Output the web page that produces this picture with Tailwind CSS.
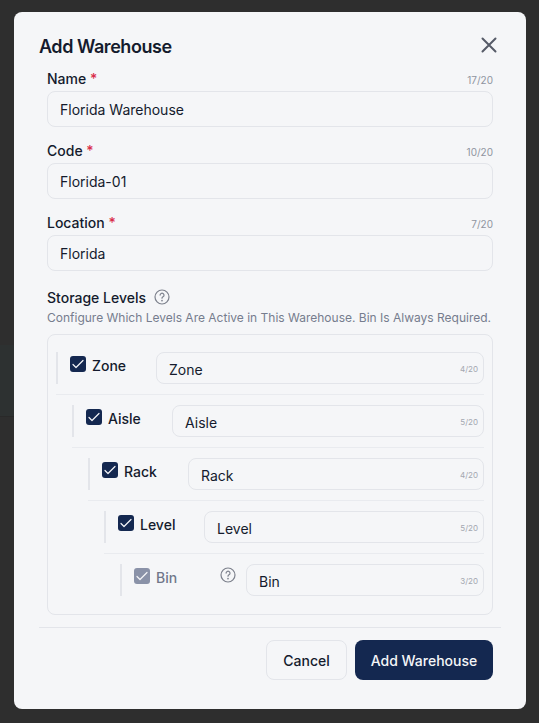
<!DOCTYPE html>
<html lang="en">
<head>
<meta charset="UTF-8">
<title>Add Warehouse</title>
<script src="https://cdn.jsdelivr.net/npm/@tailwindcss/browser@4"></script>
</head>
<body>
<div class="relative h-[723px] w-[539px] overflow-hidden bg-[#2e2e2e] pt-3 pl-[14px] font-['Inter',sans-serif]">
  <!-- page showing through the backdrop -->
  <div class="absolute top-[345px] left-0 h-[72px] w-[14px] border-b border-[#292929] bg-[#2d3131]"></div>
  <div class="relative h-[697px] w-[512px] rounded-lg bg-[#f5f6f8] px-[25px]">
    <!-- header -->
    <div class="flex h-[57px] items-start justify-between pt-[21px]">
      <h1 class="text-lg leading-7 font-semibold tracking-tight text-[#141b2d]">Add Warehouse</h1>
      <button class="mt-[3px] mr-[3px] text-[#565b68]">
        <svg width="18" height="18" viewBox="0 0 18 18" fill="none" stroke="currentColor" stroke-width="2" stroke-linecap="round"><path d="M2.5 2.5l13 13M15.5 2.5l-13 13"/></svg>
      </button>
    </div>

    <div class="px-2">
      <!-- text fields -->
      <div>
        <div class="flex h-[22px] items-center justify-between">
          <label class="mb-[2px] text-sm font-medium text-[#141b2d]">Name <span class="text-[#d92d4a]">*</span></label>
          <span class="text-[10px] text-[#8f949f]">17/20</span>
        </div>
        <input value="Florida Warehouse" class="h-9 w-full rounded-lg border border-[#e3e5ea] px-3 text-sm text-[#141b2d]">
      </div>
      <div class="mt-[14px]">
        <div class="flex h-[22px] items-center justify-between">
          <label class="mb-[2px] text-sm font-medium text-[#141b2d]">Code <span class="text-[#d92d4a]">*</span></label>
          <span class="text-[10px] text-[#8f949f]">10/20</span>
        </div>
        <input value="Florida-01" class="h-9 w-full rounded-lg border border-[#e3e5ea] px-3 text-sm text-[#141b2d]">
      </div>
      <div class="mt-[14px]">
        <div class="flex h-[22px] items-center justify-between">
          <label class="mb-[2px] text-sm font-medium text-[#141b2d]">Location <span class="text-[#d92d4a]">*</span></label>
          <span class="text-[10px] text-[#8f949f]">7/20</span>
        </div>
        <input value="Florida" class="h-9 w-full rounded-lg border border-[#e3e5ea] px-3 text-sm text-[#141b2d]">
      </div>

      <!-- storage levels -->
      <div class="mt-[17px] flex h-5 items-center gap-2">
        <span class="text-sm font-medium text-[#141b2d]">Storage Levels</span>
        <svg class="mb-[3px]" width="16" height="16" viewBox="0 0 16 16" fill="none" stroke="#7c808c" stroke-width="1.2" stroke-linecap="round"><circle cx="8" cy="8" r="7"/><path d="M6.1 6.1a1.95 1.95 0 1 1 2.9 1.75c-.65.35-1 .75-1 1.4"/><circle cx="8" cy="11.6" r=".35"/></svg>
      </div>
      <p class="mt-[1px] h-[18px] text-xs leading-[18px] whitespace-nowrap text-[#767d8e]">Configure Which Levels Are Active in This Warehouse. Bin Is Always Required.</p>

      <div class="mt-[7px] h-[281px] rounded-lg border border-[#e3e5ea] pt-[17px] pr-2 pl-2">
        <!-- Zone -->
        <div class="flex h-[43px] border-b border-[#e9ebef] pb-[10px]">
          <div class="flex w-[100px] border-l-2 border-[#e3e5ea] pt-1 pl-3">
            <span class="size-4 rounded-[3px] bg-[#142850]"><svg width="16" height="16" viewBox="0 0 16 16" fill="none" stroke="#f5f6f8" stroke-width="1.2" stroke-linecap="round" stroke-linejoin="round"><path d="M3 8.5l3 3L13 4.5"/></svg></span>
            <span class="mt-[1px] ml-[6px] text-sm leading-[18px] font-medium text-[#141b2d]">Zone</span>
          </div>
          <div class="relative flex-1">
            <input value="Zone" class="h-8 w-full rounded-lg border border-[#e3e5ea] pt-[2px] pl-3 text-sm text-[#141b2d]">
            <span class="absolute top-[11px] right-[6px] text-[8px] leading-3 text-[#a3a7b0]">4/20</span>
          </div>
        </div>
        <!-- Aisle -->
        <div class="mt-[10px] ml-4 flex h-[43px] border-b border-[#e9ebef] pb-[10px]">
          <div class="flex w-[100px] border-l-2 border-[#e3e5ea] pt-1 pl-3">
            <span class="size-4 rounded-[3px] bg-[#142850]"><svg width="16" height="16" viewBox="0 0 16 16" fill="none" stroke="#f5f6f8" stroke-width="1.2" stroke-linecap="round" stroke-linejoin="round"><path d="M3 8.5l3 3L13 4.5"/></svg></span>
            <span class="mt-[1px] ml-[6px] text-sm leading-[18px] font-medium text-[#141b2d]">Aisle</span>
          </div>
          <div class="relative flex-1">
            <input value="Aisle" class="h-8 w-full rounded-lg border border-[#e3e5ea] pt-[2px] pl-3 text-sm text-[#141b2d]">
            <span class="absolute top-[11px] right-[6px] text-[8px] leading-3 text-[#a3a7b0]">5/20</span>
          </div>
        </div>
        <!-- Rack -->
        <div class="mt-[10px] ml-8 flex h-[43px] border-b border-[#e9ebef] pb-[10px]">
          <div class="flex w-[100px] border-l-2 border-[#e3e5ea] pt-1 pl-3">
            <span class="size-4 rounded-[3px] bg-[#142850]"><svg width="16" height="16" viewBox="0 0 16 16" fill="none" stroke="#f5f6f8" stroke-width="1.2" stroke-linecap="round" stroke-linejoin="round"><path d="M3 8.5l3 3L13 4.5"/></svg></span>
            <span class="mt-[1px] ml-[6px] text-sm leading-[18px] font-medium text-[#141b2d]">Rack</span>
          </div>
          <div class="relative flex-1">
            <input value="Rack" class="h-8 w-full rounded-lg border border-[#e3e5ea] pt-[2px] pl-3 text-sm text-[#141b2d]">
            <span class="absolute top-[11px] right-[6px] text-[8px] leading-3 text-[#a3a7b0]">4/20</span>
          </div>
        </div>
        <!-- Level -->
        <div class="mt-[10px] ml-12 flex h-[43px] border-b border-[#e9ebef] pb-[10px]">
          <div class="flex w-[100px] border-l-2 border-[#e3e5ea] pt-1 pl-3">
            <span class="size-4 rounded-[3px] bg-[#142850]"><svg width="16" height="16" viewBox="0 0 16 16" fill="none" stroke="#f5f6f8" stroke-width="1.2" stroke-linecap="round" stroke-linejoin="round"><path d="M3 8.5l3 3L13 4.5"/></svg></span>
            <span class="mt-[1px] ml-[6px] text-sm leading-[18px] font-medium text-[#141b2d]">Level</span>
          </div>
          <div class="relative flex-1">
            <input value="Level" class="h-8 w-full rounded-lg border border-[#e3e5ea] pt-[2px] pl-3 text-sm text-[#141b2d]">
            <span class="absolute top-[11px] right-[6px] text-[8px] leading-3 text-[#a3a7b0]">5/20</span>
          </div>
        </div>
        <!-- Bin -->
        <div class="mt-[10px] ml-16 flex h-8">
          <div class="flex w-[126px] border-l-2 border-[#e3e5ea] pt-1 pl-3">
            <span class="size-4 rounded-[3px] bg-[#8a92a8]"><svg width="16" height="16" viewBox="0 0 16 16" fill="none" stroke="#f5f6f8" stroke-width="1.2" stroke-linecap="round" stroke-linejoin="round"><path d="M3 8.5l3 3L13 4.5"/></svg></span>
            <span class="mt-[1px] ml-[6px] text-sm leading-[18px] font-medium text-[#70768a]">Bin</span>
            <svg class="-mt-[1px] ml-[43px]" width="16" height="16" viewBox="0 0 16 16" fill="none" stroke="#7c808c" stroke-width="1.2" stroke-linecap="round"><circle cx="8" cy="8" r="7"/><path d="M6.1 6.1a1.95 1.95 0 1 1 2.9 1.75c-.65.35-1 .75-1 1.4"/><circle cx="8" cy="11.6" r=".35"/></svg>
          </div>
          <div class="relative flex-1">
            <input value="Bin" class="h-8 w-full rounded-lg border border-[#e3e5ea] pt-[2px] pl-3 text-sm text-[#141b2d]">
            <span class="absolute top-[11px] right-[6px] text-[8px] leading-3 text-[#a3a7b0]">3/20</span>
          </div>
        </div>
      </div>
    </div>

    <!-- footer -->
    <div class="mt-[12px] flex justify-end gap-2 border-t border-[#e3e5ea] px-2 pt-3">
      <button class="h-10 w-[81px] rounded-lg border border-[#e3e5ea] pt-[1px] text-sm font-medium text-[#141b2d]">Cancel</button>
      <button class="h-10 w-[138px] rounded-lg bg-[#142850] pt-[1px] text-sm font-medium text-[#f5f6f8]">Add Warehouse</button>
    </div>
  </div>
</div>
</body>
</html>
